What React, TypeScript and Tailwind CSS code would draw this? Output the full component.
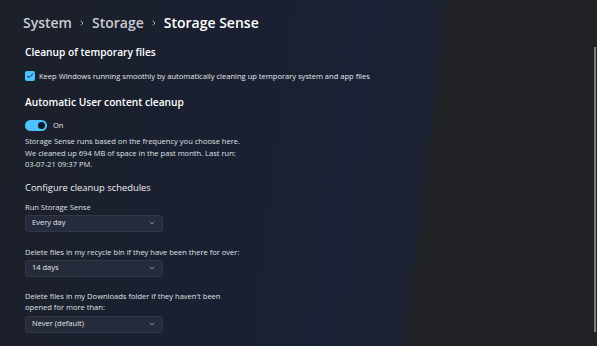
import { Check, ChevronDown, ChevronRight } from "lucide-react";

const font = { fontFamily: '"Open Sans", "Noto Sans", sans-serif' };

function Select({ value }: { value: string }) {
  return (
    <div className="w-[138px] h-[17px] flex items-center justify-between pl-[6px] pr-[6px] rounded-[3px] bg-[#262b3b] border border-[#323848] text-[7.5px] text-[#e4e6ea]">
      <span>{value}</span>
      <ChevronDown className="w-[8px] h-[8px] text-[#b8bcc6]" strokeWidth={2} />
    </div>
  );
}

export default function App() {
  return (
    <div
      style={font}
      className="relative w-[597px] h-[346px] overflow-hidden bg-[linear-gradient(97deg,#1c2029_0%,#1a2030_30%,#1a2134_58%,#1c2232_69%,#202124_71%,#202124_100%)] text-white"
    >
      {/* scrollbar thumb */}
      <div className="absolute right-[1px] top-[47px] h-[285px] w-[2px] bg-[#7d7f84]" />

      <div className="pl-[23px] pt-[12px]">
        {/* Breadcrumb */}
        <div className="flex items-center text-[14px] font-semibold leading-[22px]">
          <span className="text-[#c9ccd2]">System</span>
          <ChevronRight className="w-[8px] h-[8px] mx-[6px] text-[#c9ccd2]" strokeWidth={2.5} />
          <span className="text-[#c9ccd2]">Storage</span>
          <ChevronRight className="w-[8px] h-[8px] mx-[6px] text-[#c9ccd2]" strokeWidth={2.5} />
          <span className="text-white">Storage Sense</span>
        </div>

        <div className="pl-[2px]">
          <div className="mt-[11px] text-[10.2px] font-semibold leading-[14px] text-white">Cleanup of temporary files</div>

          <div className="mt-[11px] flex items-center gap-[4px] h-[12px]">
            <div className="w-[10px] h-[10px] rounded-[2px] bg-[#4cc2ff] flex items-center justify-center">
              <Check className="w-[8px] h-[8px] text-[#0b2233]" strokeWidth={3} />
            </div>
            <span className="text-[7.55px] leading-[12px] text-[#e6e8ec]">
              Keep Windows running smoothly by automatically cleaning up temporary system and app files
            </span>
          </div>

          <div className="mt-[13px] text-[10.2px] font-semibold leading-[14px] text-white">Automatic User content cleanup</div>

          <div className="mt-[11px] flex items-center gap-[6px] h-[11px]">
            <div className="w-[22px] h-[11px] rounded-full bg-[#4cc2ff] flex items-center justify-end pr-[2px]">
              <div className="w-[7px] h-[7px] rounded-full bg-[#0b1a26]" />
            </div>
            <span className="text-[7.55px] leading-[11px] text-[#e6e8ec]">On</span>
          </div>

          <div className="mt-[5px] w-[218px] text-[7.55px] leading-[11.5px] text-[#dfe1e6]">
            Storage Sense runs based on the frequency you choose here. We cleaned up 694 MB of space in the past month. Last run: 03-07-21 09:37 PM.
          </div>

          <div className="mt-[10px] text-[9.4px] leading-[14px] text-[#eceef1]">Configure cleanup schedules</div>

          <div className="mt-[6px] text-[7.55px] leading-[12px] text-[#dfe1e6]">Run Storage Sense</div>
          <div className="mt-[2px]">
            <Select value="Every day" />
          </div>

          <div className="mt-[14px] text-[7.55px] leading-[12px] text-[#dfe1e6]">
            Delete files in my recycle bin if they have been there for over:
          </div>
          <div className="mt-[2px]">
            <Select value="14 days" />
          </div>

          <div className="mt-[14px] w-[200px] text-[7.55px] leading-[11px] text-[#dfe1e6]">
            Delete files in my Downloads folder if they haven't been opened for more than:
          </div>
          <div className="mt-[3px]">
            <Select value="Never (default)" />
          </div>
        </div>
      </div>
    </div>
  );
}
